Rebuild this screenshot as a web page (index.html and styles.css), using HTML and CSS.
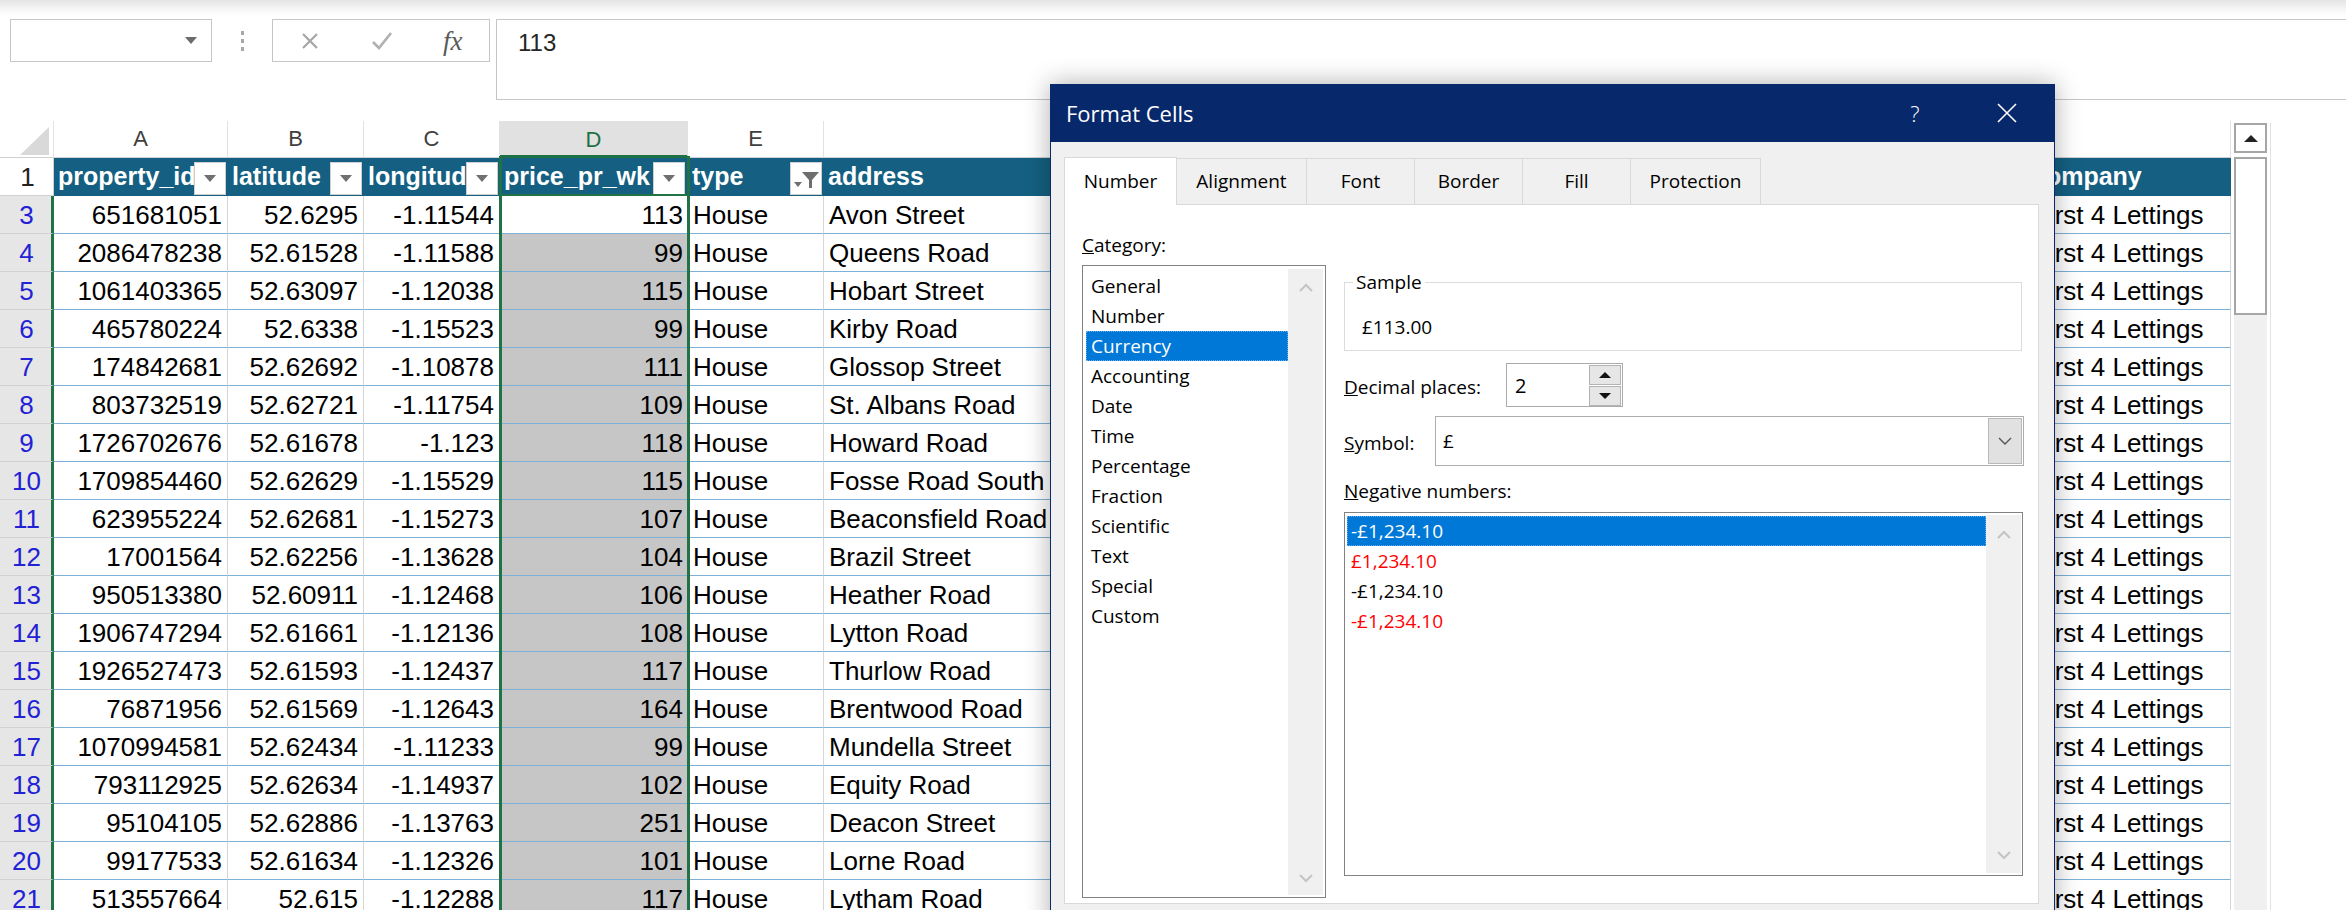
FILE: index.html
```html
<!DOCTYPE html>
<html>
<head>
<meta charset="utf-8">
<title>Excel - Format Cells</title>
<link rel="stylesheet" href="styles.css">
</head>
<body>
<div class="app">
  <div class="topshade"></div>
  <div class="fbar">
    <div class="namebox"><span class="nb-arrow"></span></div>
    <div class="fdots"><i></i><i></i><i></i></div>
    <div class="fxbox">
      <svg class="ico-x" width="20" height="20" viewBox="0 0 20 20"><path d="M3 3 L17 17 M17 3 L3 17" stroke="#a6a6a6" stroke-width="2.2" fill="none"/></svg>
      <svg class="ico-check" width="22" height="20" viewBox="0 0 22 20"><path d="M2 11 L8 17 L20 2" stroke="#b0b0b0" stroke-width="2.6" fill="none"/></svg>
      <span class="fx">fx</span>
    </div>
    <div class="formula">113</div>
  </div>

  <div class="sheet">
    <div class="grid">
      <div class="colhdr">
        <div class="ch wrh corner"><svg width="54" height="36" viewBox="0 0 54 36"><polygon points="20,34 49,34 49,6" fill="#d9d9d9"/></svg></div>
        <div class="ch wa">A</div>
        <div class="ch wb">B</div>
        <div class="ch wc">C</div>
        <div class="ch wd on">D</div>
        <div class="ch we">E</div>
        <div class="ch wf"></div>
        <div class="ch wg"></div>
        <div class="ch wh"></div>
      </div>

      <div class="row hdr">
        <div class="rh top">1</div>
        <div class="c wa"><span class="ht">property_id</span><span class="fbtn"><i class="tri"></i></span></div>
        <div class="c wb"><span class="ht">latitude</span><span class="fbtn"><i class="tri"></i></span></div>
        <div class="c wc"><span class="ht">longitude</span><span class="fbtn"><i class="tri"></i></span></div>
        <div class="c wd"><span class="ht">price_pr_wk</span><span class="fbtn"><i class="tri"></i></span></div>
        <div class="c we"><span class="ht">type</span><span class="fbtn"><svg width="30" height="31" viewBox="0 0 30 31"><polygon points="11,9 28,9 21,17 21,25 18,25 18,17" fill="#6e6e6e"/><polygon points="3,19 11,19 7,24" fill="#6e6e6e"/></svg></span></div>
        <div class="c wf"><span class="ht">address</span></div>
        <div class="c wg"></div>
        <div class="c wh"><span class="ht">company</span></div>
      </div>

      <div class="row"><div class="rh">3</div><div class="c wa num">651681051</div><div class="c wb num">52.6295</div><div class="c wc num">-1.11544</div><div class="c wd num act">113</div><div class="c we">House</div><div class="c wf">Avon Street</div><div class="c wg"></div><div class="c wh">First 4 Lettings</div></div>
      <div class="row"><div class="rh">4</div><div class="c wa num">2086478238</div><div class="c wb num">52.61528</div><div class="c wc num">-1.11588</div><div class="c wd num pick">99</div><div class="c we">House</div><div class="c wf">Queens Road</div><div class="c wg"></div><div class="c wh">First 4 Lettings</div></div>
      <div class="row"><div class="rh">5</div><div class="c wa num">1061403365</div><div class="c wb num">52.63097</div><div class="c wc num">-1.12038</div><div class="c wd num pick">115</div><div class="c we">House</div><div class="c wf">Hobart Street</div><div class="c wg"></div><div class="c wh">First 4 Lettings</div></div>
      <div class="row"><div class="rh">6</div><div class="c wa num">465780224</div><div class="c wb num">52.6338</div><div class="c wc num">-1.15523</div><div class="c wd num pick">99</div><div class="c we">House</div><div class="c wf">Kirby Road</div><div class="c wg"></div><div class="c wh">First 4 Lettings</div></div>
      <div class="row"><div class="rh">7</div><div class="c wa num">174842681</div><div class="c wb num">52.62692</div><div class="c wc num">-1.10878</div><div class="c wd num pick">111</div><div class="c we">House</div><div class="c wf">Glossop Street</div><div class="c wg"></div><div class="c wh">First 4 Lettings</div></div>
      <div class="row"><div class="rh">8</div><div class="c wa num">803732519</div><div class="c wb num">52.62721</div><div class="c wc num">-1.11754</div><div class="c wd num pick">109</div><div class="c we">House</div><div class="c wf">St. Albans Road</div><div class="c wg"></div><div class="c wh">First 4 Lettings</div></div>
      <div class="row"><div class="rh">9</div><div class="c wa num">1726702676</div><div class="c wb num">52.61678</div><div class="c wc num">-1.123</div><div class="c wd num pick">118</div><div class="c we">House</div><div class="c wf">Howard Road</div><div class="c wg"></div><div class="c wh">First 4 Lettings</div></div>
      <div class="row"><div class="rh">10</div><div class="c wa num">1709854460</div><div class="c wb num">52.62629</div><div class="c wc num">-1.15529</div><div class="c wd num pick">115</div><div class="c we">House</div><div class="c wf">Fosse Road South</div><div class="c wg"></div><div class="c wh">First 4 Lettings</div></div>
      <div class="row"><div class="rh">11</div><div class="c wa num">623955224</div><div class="c wb num">52.62681</div><div class="c wc num">-1.15273</div><div class="c wd num pick">107</div><div class="c we">House</div><div class="c wf">Beaconsfield Road</div><div class="c wg"></div><div class="c wh">First 4 Lettings</div></div>
      <div class="row"><div class="rh">12</div><div class="c wa num">17001564</div><div class="c wb num">52.62256</div><div class="c wc num">-1.13628</div><div class="c wd num pick">104</div><div class="c we">House</div><div class="c wf">Brazil Street</div><div class="c wg"></div><div class="c wh">First 4 Lettings</div></div>
      <div class="row"><div class="rh">13</div><div class="c wa num">950513380</div><div class="c wb num">52.60911</div><div class="c wc num">-1.12468</div><div class="c wd num pick">106</div><div class="c we">House</div><div class="c wf">Heather Road</div><div class="c wg"></div><div class="c wh">First 4 Lettings</div></div>
      <div class="row"><div class="rh">14</div><div class="c wa num">1906747294</div><div class="c wb num">52.61661</div><div class="c wc num">-1.12136</div><div class="c wd num pick">108</div><div class="c we">House</div><div class="c wf">Lytton Road</div><div class="c wg"></div><div class="c wh">First 4 Lettings</div></div>
      <div class="row"><div class="rh">15</div><div class="c wa num">1926527473</div><div class="c wb num">52.61593</div><div class="c wc num">-1.12437</div><div class="c wd num pick">117</div><div class="c we">House</div><div class="c wf">Thurlow Road</div><div class="c wg"></div><div class="c wh">First 4 Lettings</div></div>
      <div class="row"><div class="rh">16</div><div class="c wa num">76871956</div><div class="c wb num">52.61569</div><div class="c wc num">-1.12643</div><div class="c wd num pick">164</div><div class="c we">House</div><div class="c wf">Brentwood Road</div><div class="c wg"></div><div class="c wh">First 4 Lettings</div></div>
      <div class="row"><div class="rh">17</div><div class="c wa num">1070994581</div><div class="c wb num">52.62434</div><div class="c wc num">-1.11233</div><div class="c wd num pick">99</div><div class="c we">House</div><div class="c wf">Mundella Street</div><div class="c wg"></div><div class="c wh">First 4 Lettings</div></div>
      <div class="row"><div class="rh">18</div><div class="c wa num">793112925</div><div class="c wb num">52.62634</div><div class="c wc num">-1.14937</div><div class="c wd num pick">102</div><div class="c we">House</div><div class="c wf">Equity Road</div><div class="c wg"></div><div class="c wh">First 4 Lettings</div></div>
      <div class="row"><div class="rh">19</div><div class="c wa num">95104105</div><div class="c wb num">52.62886</div><div class="c wc num">-1.13763</div><div class="c wd num pick">251</div><div class="c we">House</div><div class="c wf">Deacon Street</div><div class="c wg"></div><div class="c wh">First 4 Lettings</div></div>
      <div class="row"><div class="rh">20</div><div class="c wa num">99177533</div><div class="c wb num">52.61634</div><div class="c wc num">-1.12326</div><div class="c wd num pick">101</div><div class="c we">House</div><div class="c wf">Lorne Road</div><div class="c wg"></div><div class="c wh">First 4 Lettings</div></div>
      <div class="row"><div class="rh">21</div><div class="c wa num">513557664</div><div class="c wb num">52.615</div><div class="c wc num">-1.12288</div><div class="c wd num pick">117</div><div class="c we">House</div><div class="c wf">Lytham Road</div><div class="c wg"></div><div class="c wh">First 4 Lettings</div></div>
    </div>

    <div class="vscroll">
      <div class="vs-up"><i class="tri-up"></i></div>
      <div class="vs-thumb"></div>
      <div class="vs-track"></div>
    </div>
    <div class="vline"></div>
  </div>

  <div class="selection"></div>

  <div class="dialog">
    <div class="dtitle">
      <span class="dtitle-text">Format Cells</span>
      <span class="dhelp">?</span>
      <svg class="dclose" width="22" height="22" viewBox="0 0 22 22"><path d="M2 2 L20 20 M20 2 L2 20" stroke="#fff" stroke-width="1.6" fill="none"/></svg>
    </div>
    <div class="dbody">
      <div class="tabs">
        <div class="tab t1 active">Number</div>
        <div class="tab t2">Alignment</div>
        <div class="tab t3">Font</div>
        <div class="tab t4">Border</div>
        <div class="tab t5">Fill</div>
        <div class="tab t6">Protection</div>
      </div>
      <div class="panel">
        <div class="leftcol">
          <div class="lbl"><u>C</u>ategory:</div>
          <div class="catlist">
            <div class="items">
              <div class="item">General</div>
              <div class="item">Number</div>
              <div class="item on">Currency</div>
              <div class="item">Accounting</div>
              <div class="item">Date</div>
              <div class="item">Time</div>
              <div class="item">Percentage</div>
              <div class="item">Fraction</div>
              <div class="item">Scientific</div>
              <div class="item">Text</div>
              <div class="item">Special</div>
              <div class="item">Custom</div>
            </div>
            <div class="lscroll">
              <svg width="14" height="10" viewBox="0 0 14 10"><path d="M1 8 L7 2 L13 8" stroke="#c4c4c4" stroke-width="2" fill="none"/></svg>
              <svg width="14" height="10" viewBox="0 0 14 10"><path d="M1 2 L7 8 L13 2" stroke="#c4c4c4" stroke-width="2" fill="none"/></svg>
            </div>
          </div>
        </div>
        <div class="rightcol">
          <fieldset class="sample">
            <legend>Sample</legend>
            <div class="sample-val">£113.00</div>
          </fieldset>
          <div class="frow dec">
            <div class="flbl w162"><u>D</u>ecimal places:</div>
            <div class="spin">
              <span class="spin-val">2</span>
              <div class="spin-btns">
                <div class="sb"><i class="tri-up small"></i></div>
                <div class="sb"><i class="tri-dn small"></i></div>
              </div>
            </div>
          </div>
          <div class="frow sym">
            <div class="flbl w91"><u>S</u>ymbol:</div>
            <div class="combo">
              <span class="combo-val">£</span>
              <div class="combo-btn"><svg width="16" height="10" viewBox="0 0 16 10"><path d="M2 2 L8 8 L14 2" stroke="#555" stroke-width="1.4" fill="none"/></svg></div>
            </div>
          </div>
          <div class="lbl neg-lbl"><u>N</u>egative numbers:</div>
          <div class="neglist">
            <div class="items">
              <div class="item on">-£1,234.10</div>
              <div class="item red">£1,234.10</div>
              <div class="item">-£1,234.10</div>
              <div class="item red">-£1,234.10</div>
            </div>
            <div class="lscroll nscroll">
              <svg width="14" height="10" viewBox="0 0 14 10"><path d="M1 8 L7 2 L13 8" stroke="#c4c4c4" stroke-width="2" fill="none"/></svg>
              <svg width="14" height="10" viewBox="0 0 14 10"><path d="M1 2 L7 8 L13 2" stroke="#c4c4c4" stroke-width="2" fill="none"/></svg>
            </div>
          </div>
        </div>
      </div>
    </div>
  </div>
</div>
</body>
</html>
```

FILE: styles.css
```css
html, body {
  margin: 0;
  padding: 0;
  background: #fff;
}
body {
  font-family: "Liberation Sans", Arial, sans-serif;
  overflow: hidden;
}
.app {
  position: relative;
  width: 2346px;
  height: 910px;
  overflow: hidden;
  background: #fff;
}
.topshade {
  height: 19px;
  background: linear-gradient(#e4e4e4 0px, #f7f7f7 10px, #ffffff 16px);
}

/* formula bar */
.fbar {
  display: flex;
  height: 81px;
  padding-left: 10px;
}
.namebox {
  box-sizing: border-box;
  width: 202px;
  height: 43px;
  border: 1px solid #c6c6c6;
  display: flex;
  align-items: center;
  justify-content: flex-end;
  padding-right: 14px;
}
.nb-arrow {
  width: 0;
  height: 0;
  border-left: 6px solid transparent;
  border-right: 6px solid transparent;
  border-top: 7px solid #6b6b6b;
}
.fdots {
  width: 60px;
  height: 43px;
  display: flex;
  flex-direction: column;
  align-items: center;
  justify-content: center;
  gap: 4px;
}
.fdots i {
  display: block;
  width: 3px;
  height: 4px;
  background: #a8a8a8;
}
.fxbox {
  box-sizing: border-box;
  width: 218px;
  height: 43px;
  border: 1px solid #c6c6c6;
  display: flex;
  align-items: center;
}
.ico-x { margin-left: 27px; }
.ico-check { margin-left: 51px; }
.fx {
  margin-left: 50px;
  font-family: "Liberation Serif", serif;
  font-style: italic;
  font-size: 27px;
  color: #5a5a5a;
  line-height: 30px;
}
.formula {
  flex: 1;
  margin-left: 6px;
  box-sizing: border-box;
  height: 81px;
  border: 1px solid #c6c6c6;
  border-right: none;
  padding: 8px 0 0 21px;
  font-size: 24px;
  line-height: 30px;
  color: #262626;
}

/* sheet */
.sheet {
  display: flex;
  margin-top: 21px;
}
.grid {
  width: 2231px;
  flex: none;
}
.colhdr {
  display: flex;
  height: 37px;
}
.ch {
  box-sizing: border-box;
  height: 37px;
  border-right: 1px solid #e2e2e2;
  border-bottom: 1px solid #d0d0d0;
  text-align: center;
  font-size: 22px;
  line-height: 36px;
  color: #404040;
}
.ch.corner {
  border-right: 1px solid #e2e2e2;
  line-height: 0;
}
.ch.on {
  background: #e1e1e1;
  color: #1e7145;
  border-bottom: 3px solid #1e7145;
  line-height: 38px;
}
.wrh { width: 54px; flex: none; }
.wa { width: 174px; flex: none; }
.wb { width: 136px; flex: none; }
.wc { width: 136px; flex: none; }
.wd { width: 188px; flex: none; }
.we { width: 136px; flex: none; }
.wf { width: 576px; flex: none; }
.wg { width: 628px; flex: none; }
.wh { width: 203px; flex: none; }

.row {
  display: flex;
  height: 38px;
}
.rh {
  box-sizing: border-box;
  width: 54px;
  flex: none;
  height: 38px;
  background: #e6e6e6;
  border-right: 3px solid #217346;
  border-bottom: 1px solid #d2d2d2;
  color: #2222d4;
  font-size: 26px;
  line-height: 39px;
  text-align: center;
  padding-left: 2px;
}
.rh.top {
  background: #fff;
  color: #222;
  border-right: 1px solid #d0d0d0;
}
.c {
  box-sizing: border-box;
  height: 38px;
  border-right: 1px solid #d6d6d6;
  border-bottom: 1px solid #7fb1d6;
  padding: 0 5px;
  font-size: 26px;
  line-height: 39px;
  color: #000;
  white-space: nowrap;
  overflow: hidden;
}
.c.num {
  text-align: right;
  padding-right: 5px;
}
.c.pick {
  background: #c6c6c6;
}
.c.act {
  background: #fff;
}
.c.wd { padding-right: 4px; }

.row.hdr .c {
  background: #156082;
  border-right: 1px solid #156082;
  border-bottom: 1px solid #156082;
  color: #fff;
  font-weight: bold;
  font-size: 25px;
  display: flex;
  align-items: flex-start;
  padding: 0 1px 0 4px;
  line-height: 37px;
}
.row.hdr .c.wd {
  padding-right: 2px;
  border-bottom: 2px solid #217346;
}
.ht {
  flex: 1;
  overflow: hidden;
  white-space: nowrap;
}
.fbtn {
  flex: none;
  box-sizing: border-box;
  width: 32px;
  height: 33px;
  margin-top: 4px;
  background: #fff;
  border: 1px solid #cfcfcf;
  display: flex;
  align-items: center;
  justify-content: center;
}
.fbtn .tri {
  width: 0;
  height: 0;
  border-left: 6px solid transparent;
  border-right: 6px solid transparent;
  border-top: 7px solid #707070;
}

/* vertical scrollbar */
.vscroll {
  width: 33px;
  margin-left: 3px;
  margin-top: 2px;
  height: 790px;
  display: flex;
  flex-direction: column;
  flex: none;
}
.vs-up {
  box-sizing: border-box;
  height: 30px;
  border: 2px solid #a6a6a6;
  background: #fff;
  display: flex;
  align-items: center;
  justify-content: center;
}
.tri-up {
  width: 0;
  height: 0;
  border-left: 7px solid transparent;
  border-right: 7px solid transparent;
  border-bottom: 7px solid #222;
}
.vs-thumb {
  box-sizing: border-box;
  margin-top: 4px;
  height: 158px;
  border: 2px solid #a6a6a6;
  background: #fff;
}
.vs-track {
  flex: 1;
  background: #f0f0f0;
}
.vline {
  width: 1px;
  margin-left: 3px;
  margin-top: 2px;
  height: 790px;
  background: #e2e2e2;
  flex: none;
}

/* selection outline over column D */
.selection {
  position: absolute;
  left: 499px;
  top: 156px;
  width: 191px;
  height: 800px;
  box-sizing: border-box;
  border-left: 3px solid #217346;
  border-right: 3px solid #217346;
  pointer-events: none;
}

/* dialog */
.dialog {
  position: absolute;
  left: 1050px;
  top: 84px;
  width: 1005px;
  height: 880px;
  box-sizing: border-box;
  background: #f0f0f0;
  border: 1px solid #0b2a6c;
  border-top: none;
  box-shadow: 0 0 24px rgba(0, 0, 0, 0.32);
  font-family: "Open Sans", "Noto Sans", sans-serif;
  font-size: 19px;
  color: #000;
}
.dtitle {
  height: 58px;
  margin: 0 -1px;
  background: #08286c;
  color: #fff;
  display: flex;
  align-items: center;
  padding-left: 16px;
}
.dtitle-text {
  flex: 1;
  font-size: 22px;
}
.dhelp {
  width: 30px;
  text-align: center;
  font-size: 22px;
  font-weight: 300;
}
.dclose {
  margin-left: 66px;
  margin-right: 37px;
}
.dbody {
  padding: 16px 15px 0 13px;
}
.tabs {
  display: flex;
  align-items: flex-end;
  height: 46px;
}
.tab {
  box-sizing: border-box;
  height: 46px;
  border: 1px solid #d9d9d9;
  border-left: none;
  border-bottom: none;
  background: #f0f0f0;
  display: flex;
  align-items: center;
  justify-content: center;
  padding-bottom: 2px;
}
.tab.active {
  height: 48px;
  background: #fff;
  border-left: 1px solid #d9d9d9;
  margin-bottom: -1px;
  position: relative;
  z-index: 1;
}
.t1 { width: 113px; }
.t2 { width: 130px; }
.t3 { width: 108px; }
.t4 { width: 108px; }
.t5 { width: 108px; }
.t6 { width: 130px; }
.panel {
  box-sizing: border-box;
  width: 975px;
  height: 700px;
  background: #fff;
  border: 1px solid #d9d9d9;
  display: flex;
  padding-left: 17px;
}
.leftcol {
  width: 244px;
  flex: none;
}
.lbl {
  line-height: 26px;
  white-space: nowrap;
}
.leftcol .lbl {
  margin-top: 27px;
}
.catlist {
  box-sizing: border-box;
  margin-top: 7px;
  height: 633px;
  border: 1px solid #828282;
  display: flex;
}
.items {
  flex: 1;
  padding: 5px 0 0 3px;
}
.item {
  height: 30px;
  line-height: 30px;
  padding-left: 5px;
  white-space: nowrap;
}
.item.on {
  background: #0078d7;
  color: #fff;
  outline: 1px dotted #6aa8e6;
  outline-offset: -1px;
}
.item.red {
  color: #f00;
}
.lscroll {
  width: 35px;
  margin: 3px 2px 2px 0;
  background: #f0f0f0;
  display: flex;
  flex-direction: column;
  align-items: center;
  justify-content: space-between;
  padding: 14px 0 12px;
  box-sizing: border-box;
}
.rightcol {
  margin-left: 18px;
  width: 680px;
  flex: none;
}
.sample {
  margin: 64px 0 0 0;
  width: 678px;
  box-sizing: border-box;
  border: 1px solid #dcdcdc;
  padding: 0 0 10px 8px;
}
.sample legend {
  padding: 0 3px;
  line-height: 26px;
}
.sample-val {
  margin-top: 19px;
  padding-left: 9px;
  line-height: 26px;
}
.frow {
  display: flex;
  align-items: center;
}
.frow.dec {
  margin-top: 12px;
}
.frow.sym {
  margin-top: 9px;
}
.flbl {
  flex: none;
  line-height: 26px;
  padding-top: 3px;
}
.w162 { width: 162px; }
.w91 { width: 91px; }
.spin {
  box-sizing: border-box;
  width: 117px;
  height: 44px;
  border: 1px solid #ababab;
  background: #fff;
  display: flex;
  align-items: center;
  justify-content: space-between;
  padding-left: 8px;
  padding-right: 1px;
}
.spin-val {
  font-size: 20px;
}
.spin-btns {
  display: flex;
  flex-direction: column;
  width: 32px;
  gap: 1px;
}
.sb {
  box-sizing: border-box;
  height: 20px;
  background: #e6e6e6;
  border: 1px solid #b4b4b4;
  display: flex;
  align-items: center;
  justify-content: center;
}
.tri-up.small {
  border-left: 6px solid transparent;
  border-right: 6px solid transparent;
  border-bottom: 6px solid #111;
}
.tri-dn {
  width: 0;
  height: 0;
  border-left: 6px solid transparent;
  border-right: 6px solid transparent;
  border-top: 6px solid #111;
}
.combo {
  box-sizing: border-box;
  width: 589px;
  height: 50px;
  border: 1px solid #adadad;
  background: #fff;
  display: flex;
  align-items: center;
  justify-content: space-between;
  padding-left: 7px;
  padding-right: 1px;
}
.combo-btn {
  box-sizing: border-box;
  width: 34px;
  height: 46px;
  background: #e1e1e1;
  border: 1px solid #b9b9b9;
  display: flex;
  align-items: center;
  justify-content: center;
}
.neg-lbl {
  margin-top: 12px;
}
.neglist {
  box-sizing: border-box;
  margin-top: 8px;
  width: 679px;
  height: 364px;
  border: 1px solid #828282;
  display: flex;
}
.neglist .items {
  padding: 3px 0 0 2px;
}
.neglist .item {
  padding-left: 4px;
}
.nscroll {
  margin: 2px 1px 2px 0;
  padding: 15px 0 13px;
}
```
